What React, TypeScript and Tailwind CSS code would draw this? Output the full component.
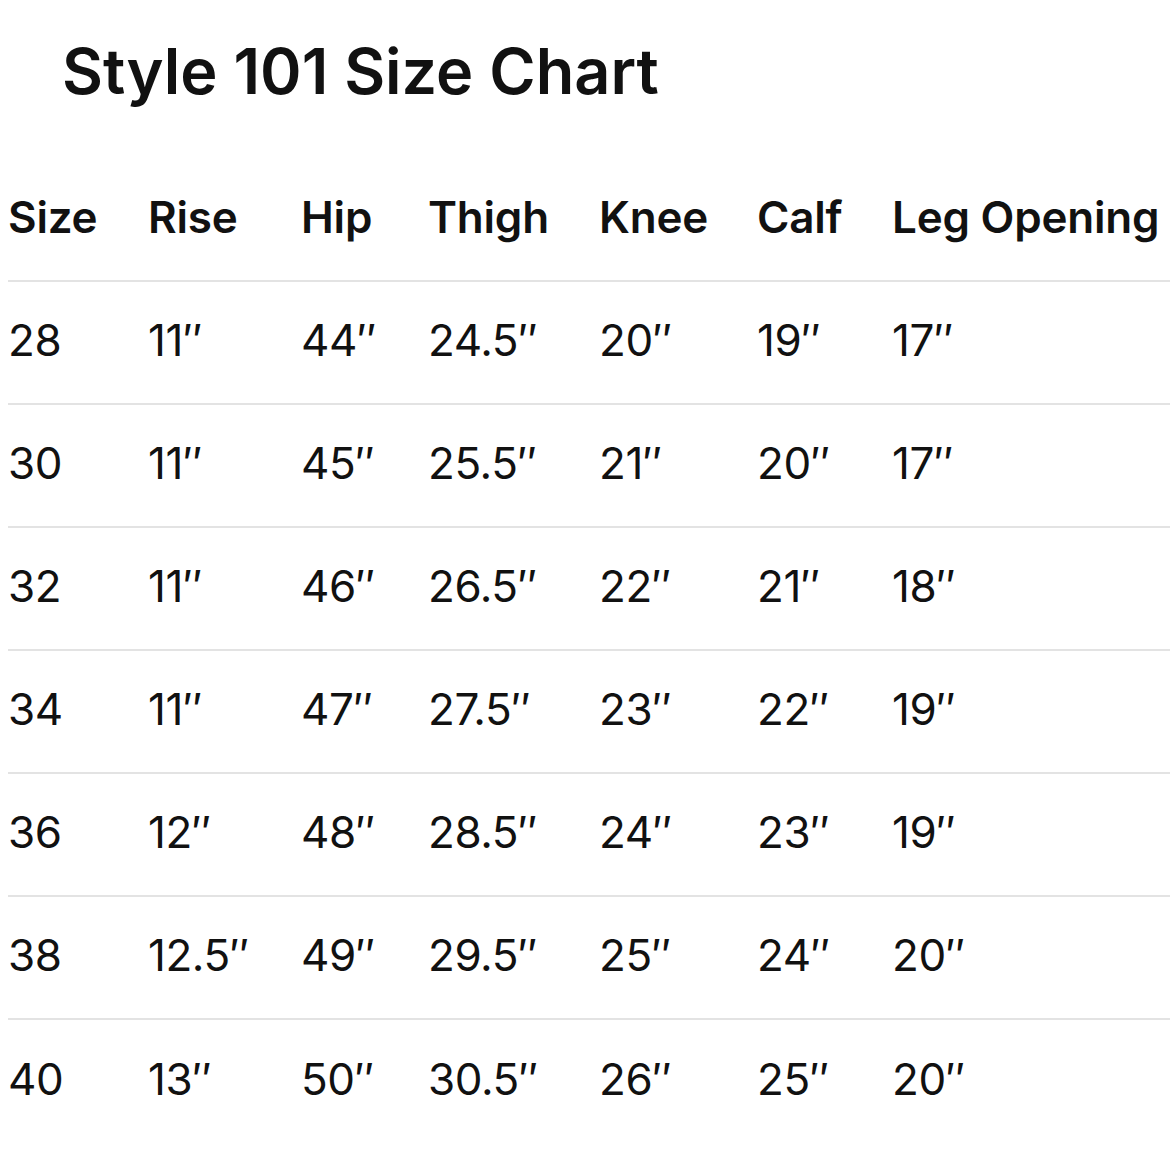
const headers = ["Size", "Rise", "Hip", "Thigh", "Knee", "Calf", "Leg Opening"];

const rows: string[][] = [
  ["28", "11″", "44″", "24.5″", "20″", "19″", "17″"],
  ["30", "11″", "45″", "25.5″", "21″", "20″", "17″"],
  ["32", "11″", "46″", "26.5″", "22″", "21″", "18″"],
  ["34", "11″", "47″", "27.5″", "23″", "22″", "19″"],
  ["36", "12″", "48″", "28.5″", "24″", "23″", "19″"],
  ["38", "12.5″", "49″", "29.5″", "25″", "24″", "20″"],
  ["40", "13″", "50″", "30.5″", "26″", "25″", "20″"],
];

const cols = "grid grid-cols-[140px_153px_127px_171px_158px_135px_1fr]";

export default function App() {
  return (
    <div className="w-[1170px] h-[1171px] bg-white text-[#111] overflow-hidden font-['Inter','Liberation_Sans',sans-serif]">
      <h1 className="pl-[62px] pt-[35px] h-[159px] text-[63px] leading-[72px] font-semibold">
        Style 101 Size Chart
      </h1>
      <div className="pl-[8px]">
        <div className={`${cols} h-[123px] pb-[5px] items-center border-b-2 border-[#e3e3e3] text-[44px] font-semibold tracking-[-0.005em]`}>
          {headers.map((h) => (
            <div key={h} className="whitespace-nowrap">{h}</div>
          ))}
        </div>
        {rows.map((r, i) => (
          <div
            key={r[0]}
            className={[
              cols,
              "h-[123px] pb-[5px] items-center text-[44px] font-normal tracking-[-0.01em]",
              i < rows.length - 1 ? "border-b-2 border-[#e3e3e3]" : "",
            ].join(" ")}
          >
            {r.map((c, j) => (
              <div key={j} className="whitespace-nowrap">{c}</div>
            ))}
          </div>
        ))}
      </div>
    </div>
  );
}
